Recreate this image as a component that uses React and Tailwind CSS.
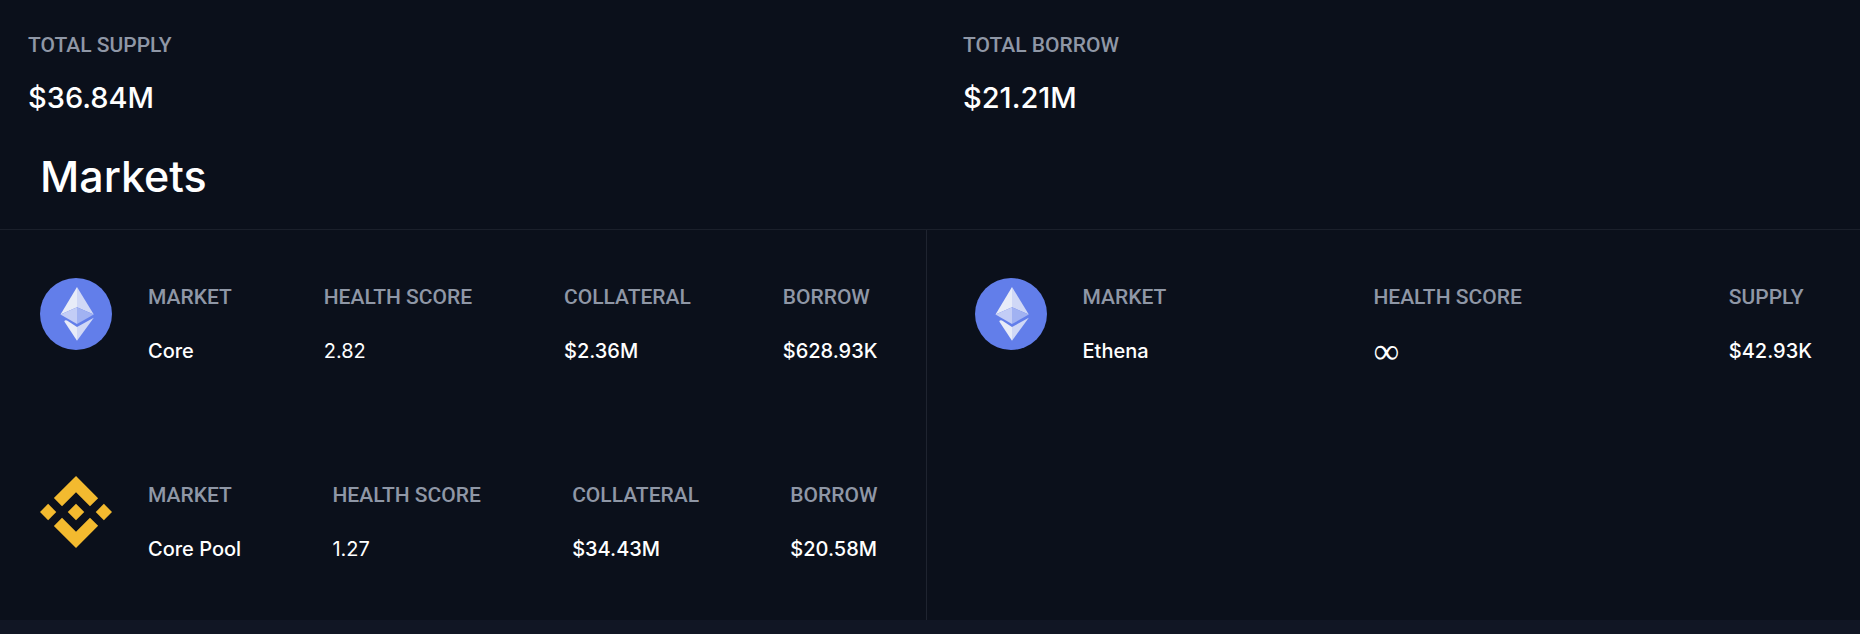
const totals = [
  { label: 'Total supply', value: '$36.84M' },
  { label: 'Total borrow', value: '$21.21M' }
]

const chains = [
  [
    {
      icon: EthereumIcon,
      name: 'Core',
      health: '2.82',
      amounts: [
        { label: 'Collateral', value: '$2.36M' },
        { label: 'Borrow', value: '$628.93K' }
      ]
    },
    {
      icon: BnbIcon,
      name: 'Core Pool',
      health: '1.27',
      amounts: [
        { label: 'Collateral', value: '$34.43M' },
        { label: 'Borrow', value: '$20.58M' }
      ]
    }
  ],
  [
    {
      icon: EthereumIcon,
      name: 'Ethena',
      health: '∞',
      amounts: [{ label: 'Supply', value: '$42.93K' }]
    }
  ]
]

function EthereumIcon() {
  return (
    <svg className="size-[72px] shrink-0" viewBox="0 0 72 72" aria-label="Ethereum">
      <circle cx="36" cy="36" r="36" fill="#627eea" />
      <path d="M37 9 20.5 36.5 37 29.3z" fill="#e8ecf8" />
      <path d="M37 9 53.8 36.5 37 29.3z" fill="#d0d8f6" />
      <path d="M20.5 36.5 37 29.3v16.8z" fill="#c3cdf6" />
      <path d="M53.8 36.5 37 29.3v16.8z" fill="#a1b2f2" />
      <path d="M24.3 43.6Q24.8 41.6 27 42.6L37 49v13.8z" fill="#e8ecf8" />
      <path d="M53.8 39.8 37 49v13.8z" fill="#d0d8f6" />
    </svg>
  )
}

function BnbIcon() {
  return (
    <svg className="size-[72px] shrink-0" viewBox="0 0 126.61 126.61" fill="#f3ba2f" aria-label="BNB Chain">
      <path d="M38.73 53.2 63.32 28.62l24.6 24.6 14.3-14.31L63.32 0l-38.9 38.9z" />
      <path d="M0 63.31 14.3 49l14.31 14.31-14.31 14.3z" />
      <path d="M38.73 73.41 63.32 98l24.6-24.6 14.31 14.29-38.91 38.92-38.91-38.88z" />
      <path d="M98 63.31 112.3 49l14.31 14.3-14.31 14.32z" />
      <path d="M77.83 63.3 63.32 48.78 48.81 63.28l14.51 14.5z" />
    </svg>
  )
}

function Label({ children }) {
  return (
    <dt className="font-['Roboto',sans-serif] text-[21px] leading-6 font-medium uppercase text-[#8f97a6]">
      {children}
    </dt>
  )
}

function Stat({ label, children }) {
  return (
    <div className="flex flex-col gap-[30px]">
      <Label>{label}</Label>
      <dd className="text-[20px] leading-6 font-medium text-white">{children}</dd>
    </div>
  )
}

function HealthScore({ value }) {
  if (value === '∞') {
    return <span className="font-['Liberation_Serif',serif] text-[36px] font-normal">{value}</span>
  }
  return <span className="font-normal">{value}</span>
}

function MarketRow({ market }) {
  const Icon = market.icon

  return (
    <li className="flex gap-9">
      <Icon />
      <dl className="flex flex-1 justify-between pt-[7px] whitespace-nowrap">
        <Stat label="Market">{market.name}</Stat>
        <Stat label="Health score">
          <HealthScore value={market.health} />
        </Stat>
        {market.amounts.map((amount) => (
          <Stat key={amount.label} label={amount.label}>{amount.value}</Stat>
        ))}
      </dl>
    </li>
  )
}

export default function App() {
  return (
    <div className="min-h-screen bg-[#111624] font-['Inter',sans-serif]">
      <main className="bg-[#0b101b]">
        {/* Totals */}
        <dl className="grid grid-cols-2 gap-[66px] px-7 pt-[33px]">
          {totals.map((total) => (
            <div key={total.label} className="flex flex-col gap-[21px]">
              <Label>{total.label}</Label>
              <dd className="text-[29px] leading-10 font-medium text-white">{total.value}</dd>
            </div>
          ))}
        </dl>

        <h1 className="px-10 pt-[34px] pb-[29px] text-[43px] leading-12 font-medium text-white">Markets</h1>

        {/* Positions, one column per chain group */}
        <div className="flex border-t border-[#1b202b]">
          {chains.map((markets, index) => (
            <ul
              key={index}
              className="flex flex-1 flex-col gap-[113px] border-[#1f2430] px-12 pt-12 pb-[59px] first:border-r first:pl-10"
            >
              {markets.map((market) => (
                <MarketRow key={market.name} market={market} />
              ))}
            </ul>
          ))}
        </div>
      </main>
    </div>
  )
}
